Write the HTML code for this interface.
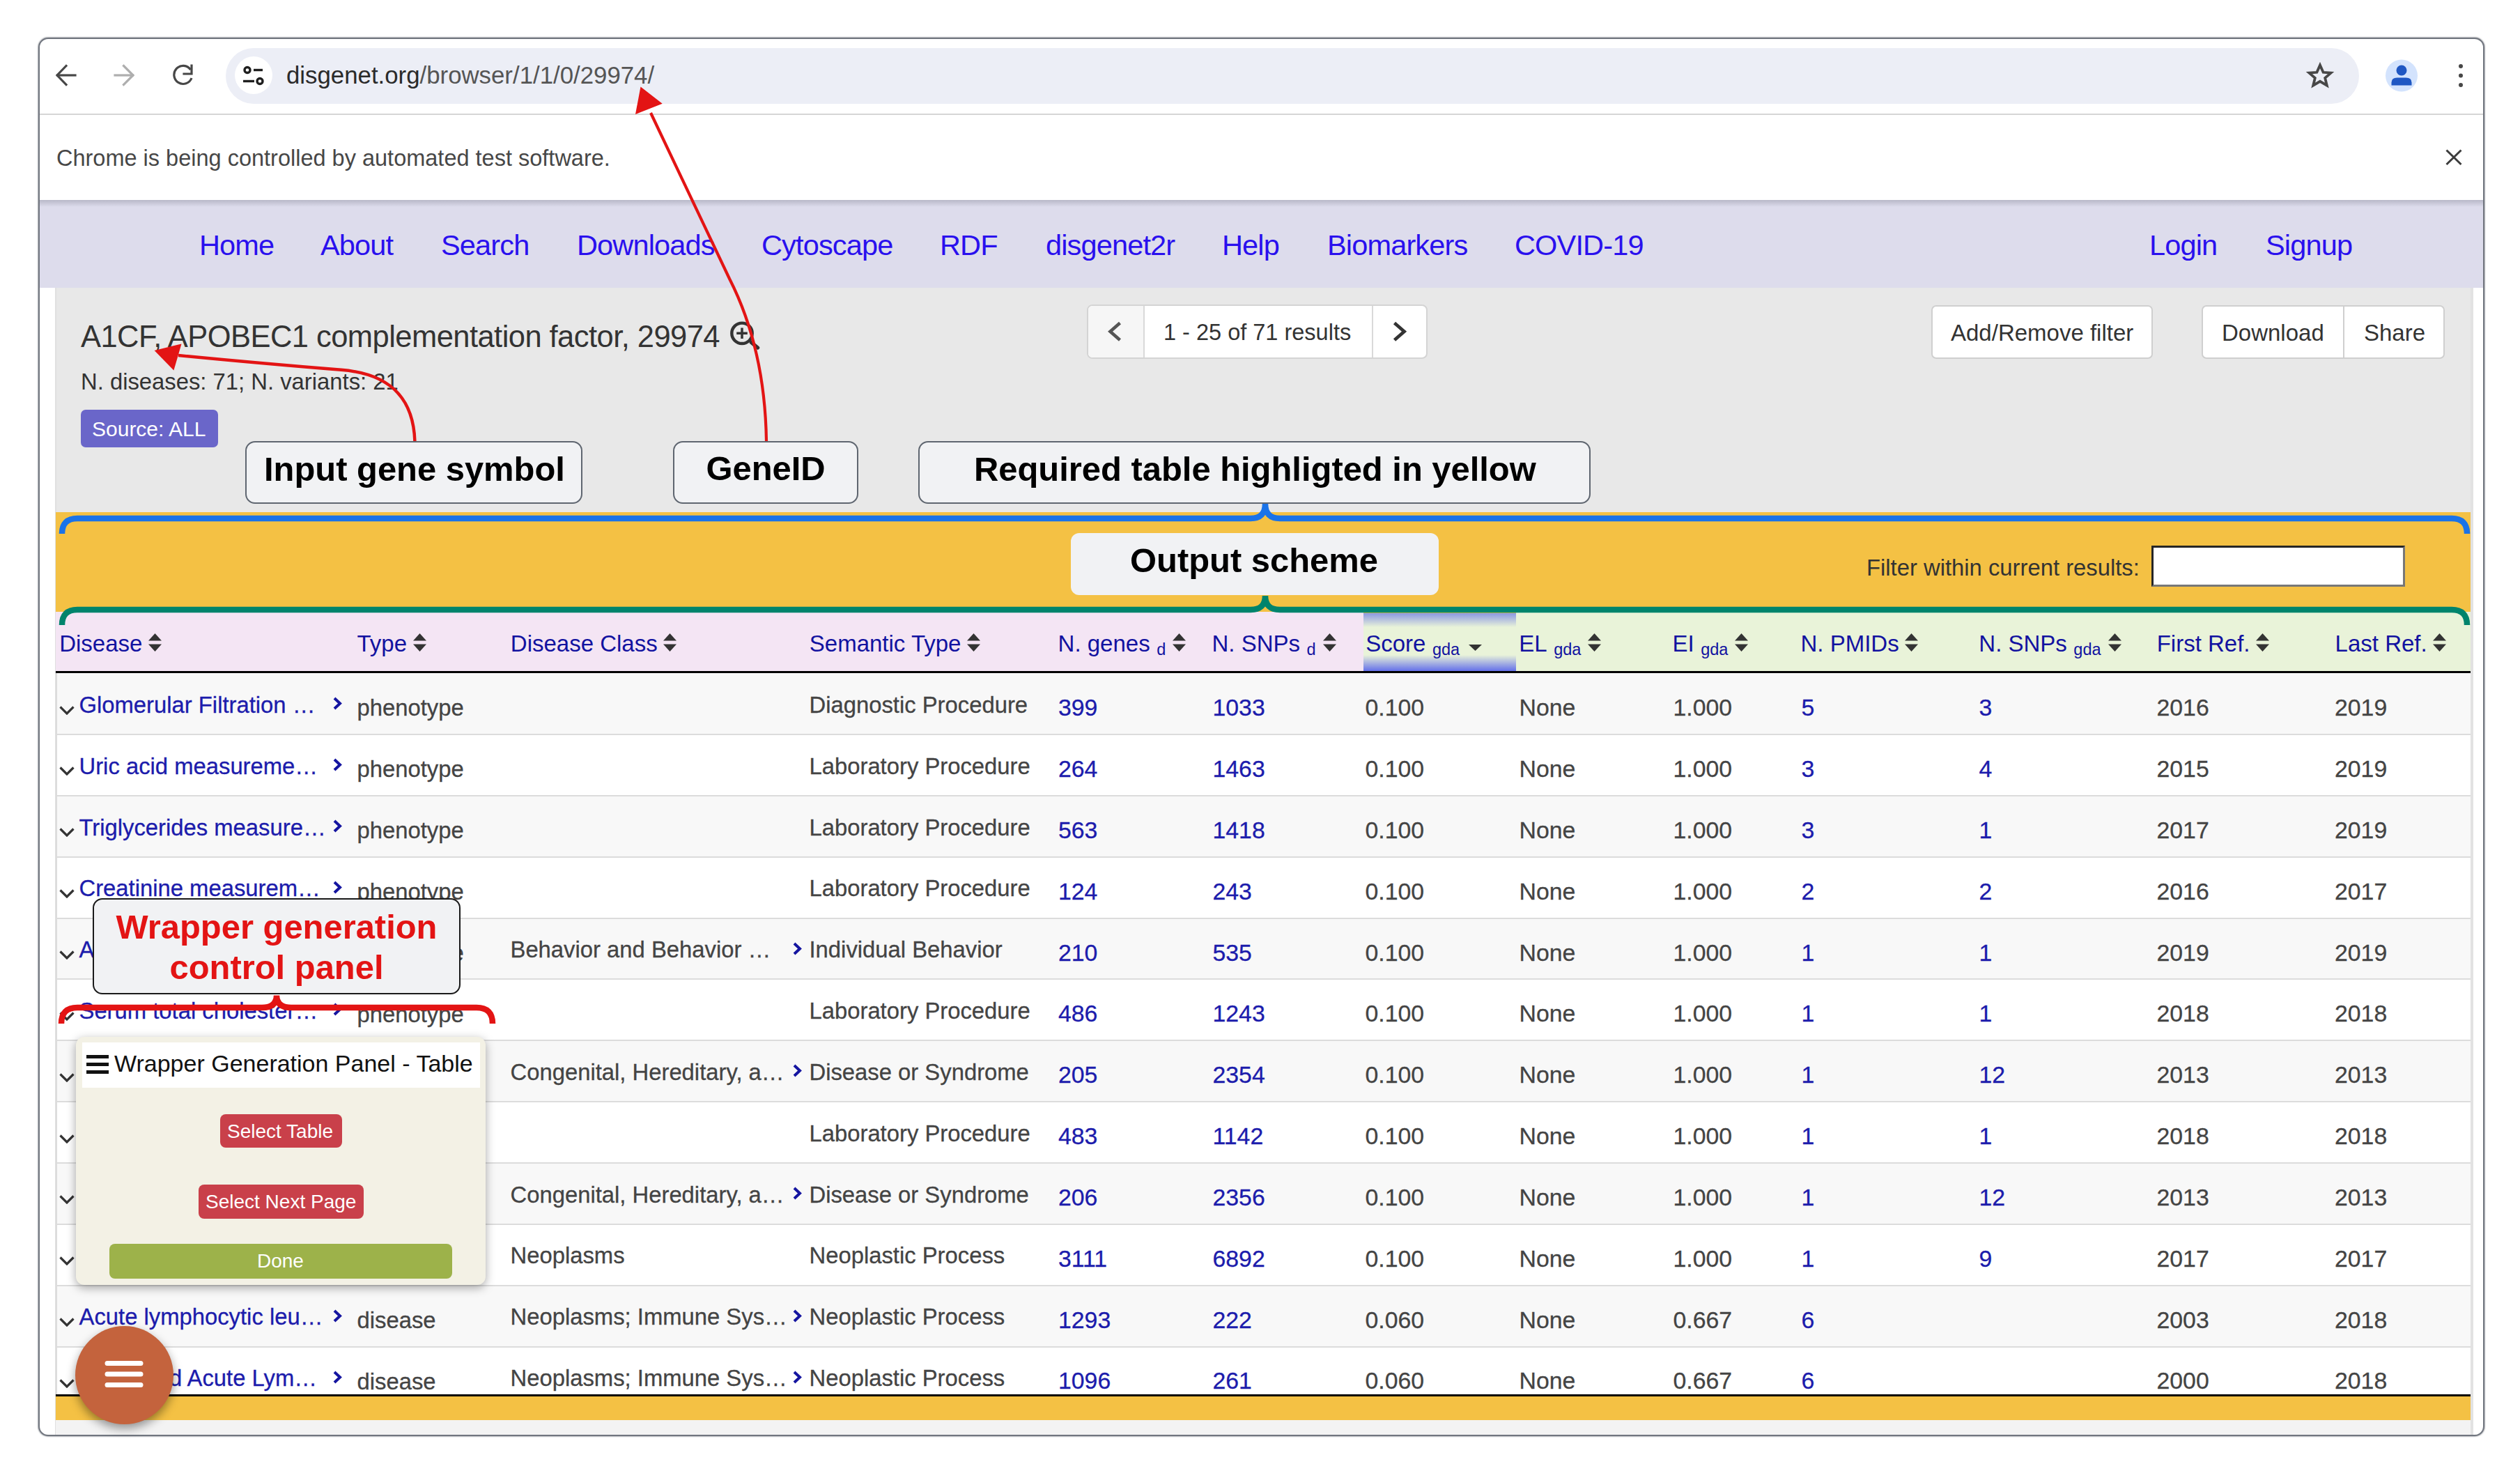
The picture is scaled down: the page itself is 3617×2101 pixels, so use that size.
<!DOCTYPE html>
<html><head><meta charset="utf-8">
<style>
*{box-sizing:border-box}
html,body{margin:0;padding:0}
body{width:3617px;height:2101px;position:relative;overflow:hidden;background:#fff;font-family:"Liberation Sans",sans-serif}
.a{position:absolute}
.t{position:absolute;white-space:nowrap;line-height:1}
#win{position:absolute;left:54.5px;top:53.5px;width:3511px;height:2007px;border:2.5px solid #71767f;border-radius:14px;overflow:hidden;background:#fff;box-shadow:0 0 1.5px 1px rgba(120,124,132,0.55)}
.nav{color:#2a10ee;font-size:41.5px;letter-spacing:-0.85px}
.annot{position:absolute;background:#f1f2f4;border:2.5px solid #5f6670;border-radius:14px;font-weight:bold;font-size:48px;color:#000;text-align:center}
.btn{position:absolute;background:#fff;border:2px solid #cfcfcf;border-radius:7px;font-size:33px;color:#333}
.hd{font-size:33px;color:#1212a0;display:flex;align-items:baseline}
.td{font-size:32.8px;-webkit-text-stroke:0.3px currentColor}
</style></head>
<body>
<div id="win"></div>

<!-- toolbar -->
<div class="a" style="left:57px;top:163px;width:3507px;height:2px;background:#d6d6d6"></div>
<div class="a" style="left:324px;top:69px;width:3062px;height:80px;border-radius:40px;background:#eceef6"></div>
<div class="a" style="left:337px;top:81px;width:54px;height:54px;border-radius:27px;background:#fff"></div>
<div class="t" style="left:411px;top:91px;font-size:34.8px;color:#2a2a2a">disgenet.org<span style="color:#555">/browser/1/1/0/29974/</span></div>

<!-- infobar -->
<div class="t" style="left:81px;top:211px;font-size:32.5px;color:#474747">Chrome is being controlled by automated test software.</div>

<!-- nav -->
<div class="a" style="left:57px;top:287px;width:3507px;height:126px;background:#dddcec"></div>
<div class="a" style="left:57px;top:287px;width:3507px;height:10px;background:linear-gradient(#b8b8c8,#dddcec)"></div>
<div class="t nav" style="left:286px;top:331px">Home</div>
<div class="t nav" style="left:460px;top:331px">About</div>
<div class="t nav" style="left:633px;top:331px">Search</div>
<div class="t nav" style="left:828px;top:331px">Downloads</div>
<div class="t nav" style="left:1093px;top:331px">Cytoscape</div>
<div class="t nav" style="left:1349px;top:331px">RDF</div>
<div class="t nav" style="left:1501px;top:331px">disgenet2r</div>
<div class="t nav" style="left:1754px;top:331px">Help</div>
<div class="t nav" style="left:1905px;top:331px">Biomarkers</div>
<div class="t nav" style="left:2174px;top:331px">COVID-19</div>
<div class="t nav" style="left:3085px;top:331px">Login</div>
<div class="t nav" style="left:3252px;top:331px">Signup</div>

<!-- content gray -->
<div class="a" style="left:80px;top:413px;width:3467px;height:1646px;background:#e8e8e8"></div>


<!-- toolbar icons -->
<svg class="a" style="left:0;top:0" width="600" height="170" viewBox="0 0 600 170">
 <g fill="none" stroke="#474747" stroke-width="3.2" stroke-linecap="square">
  <path d="M82.5 108 H108"/><path d="M95 94.5 L82 108 L95 121.5"/>
 </g>
 <g fill="none" stroke="#aeaeae" stroke-width="3.2" stroke-linecap="square">
  <path d="M165 108 H190.5"/><path d="M177.5 94.5 L191 108 L177.5 121.5"/>
 </g>
 <g fill="none" stroke="#474747" stroke-width="3.2">
  <path d="M273.5 100 A13 13 0 1 0 275 112"/>
  <path d="M275 94 V106 H264" stroke-linecap="square"/>
 </g>
 <g fill="none" stroke="#1f1f1f" stroke-width="3.4">
  <circle cx="355" cy="100.5" r="4"/><path d="M364 100.5 H377"/>
  <circle cx="373" cy="116.5" r="4"/><path d="M349 116.5 H365"/>
 </g>
</svg>
<svg class="a" style="left:3290px;top:70px" width="270" height="180" viewBox="3290 70 270 180">
 <path d="M3330 93.5 L3334.6 103.8 L3345.6 104.6 L3337.2 111.9 L3339.8 122.6 L3330 116.8 L3320.2 122.6 L3322.8 111.9 L3314.4 104.6 L3325.4 103.8 Z" fill="none" stroke="#474747" stroke-width="3.8" stroke-linejoin="miter"/>
 <circle cx="3447" cy="108.5" r="23" fill="#d3e3fd"/>
 <circle cx="3447" cy="101" r="7.5" fill="#1f57c3"/>
 <path d="M3432.5 122.5 v-4 q0-7 8-7 h13 q8 0 8 7 v4 z" fill="#1f57c3"/>
 <circle cx="3532" cy="95" r="3" fill="#474747"/><circle cx="3532" cy="108.5" r="3" fill="#474747"/><circle cx="3532" cy="122" r="3" fill="#474747"/>
 <path d="M3511.5 215.5 L3532.5 236 M3532.5 215.5 L3511.5 236" stroke="#3c3c3c" stroke-width="3"/>
</svg>

<!-- header area -->
<div class="t" style="left:116px;top:462px;font-size:43.5px;letter-spacing:-0.55px;color:#333">A1CF, APOBEC1 complementation factor, 29974</div>
<svg class="a" style="left:1044px;top:458px" width="50" height="46" viewBox="0 0 50 46">
 <circle cx="21" cy="20.3" r="14.7" fill="none" stroke="#333" stroke-width="4.4"/>
 <path d="M34.5 33.5 L43.5 41" stroke="#333" stroke-width="5.5" stroke-linecap="round"/>
 <path d="M21 12.5 V28 M13.2 20.3 H28.8" stroke="#333" stroke-width="3.5"/>
</svg>
<div class="t" style="left:116px;top:532px;font-size:32.8px;color:#333">N. diseases: 71; N. variants: 21</div>
<div class="a" style="left:116px;top:588px;width:197px;height:54px;background:#6a66c9;border-radius:7px"></div>
<div class="t" style="left:132px;top:601px;font-size:30px;color:#fff">Source: ALL</div>

<!-- pagination -->
<div class="a" style="left:1560px;top:436.5px;width:489px;height:78px;border:2px solid #d4d4d4;border-radius:8px;background:#fff;overflow:hidden">
 <div class="a" style="left:0;top:0;width:81px;height:74px;background:#f6f6f6;border-right:2.5px solid #d9d9d9"></div>
 <div class="a" style="left:407px;top:0;width:80px;height:74px;border-left:2.5px solid #d9d9d9"></div>
</div>
<svg class="a" style="left:1585px;top:455px" width="440" height="40" viewBox="1585 455 440 40">
 <path d="M1607.5 463.5 L1593.5 475.7 L1607.5 488" fill="none" stroke="#555" stroke-width="4.6"/>
 <path d="M2001.5 463.5 L2015.5 475.7 L2001.5 488" fill="none" stroke="#333" stroke-width="4.8"/>
</svg>
<div class="t" style="left:1670px;top:461px;font-size:32.5px;color:#333">1 - 25 of 71 results</div>

<!-- buttons -->
<div class="btn" style="left:2772px;top:437.5px;width:318px;height:77px"></div>
<div class="t" style="left:2800px;top:461px;font-size:33px;color:#333">Add/Remove filter</div>
<div class="btn" style="left:3160px;top:437.5px;width:349px;height:77px"></div>
<div class="a" style="left:3363px;top:439px;width:2px;height:74px;background:#cfcfcf"></div>
<div class="t" style="left:3189px;top:461px;font-size:33px;color:#333">Download</div>
<div class="t" style="left:3393px;top:461px;font-size:33px;color:#333">Share</div>

<div class="a" style="left:3546px;top:413px;width:3.5px;height:1646px;background:#e2e2e2"></div>
<div class="a" style="left:78.5px;top:413px;width:2px;height:1646px;background:#e0e0e0"></div>
<!--TABLE-->
<div class="a" style="left:80px;top:735px;width:3466px;height:1303px;background:#f4c144"></div>
<div class="a" style="left:80px;top:2038px;width:3466px;height:21px;background:#f3f3f3"></div>
<div class="t" style="left:2679px;top:799px;font-size:32.8px;color:#333">Filter within current results:</div>
<div class="a" style="left:3087.5px;top:782.5px;width:364.5px;height:59px;background:#fff;border:3px solid #777;border-top:3.5px solid #262626;border-left:3.5px solid #262626"></div>
<div class="a" style="left:80px;top:878px;width:1877px;height:85px;background:#f4e5f4"></div>
<div class="a" style="left:1957px;top:880px;width:219px;height:83px;background:linear-gradient(#8a98e2 0px,#e9f3d9 20px,#e9f3d9 60px,#6470ea 83px)"></div>
<div class="a" style="left:2176px;top:878px;width:1370px;height:85px;background:#e9f3d9"></div>
<div class="a" style="left:80px;top:963px;width:3466px;height:2.5px;background:#000"></div>
<div class="t hd" style="left:85.2px;top:907px">Disease<svg width="19" height="26" viewBox="0 0 19 26" style="margin-left:8.5px;vertical-align:0"><path d="M0 10.5 L9.5 0 L19 10.5Z M0 15.5 L19 15.5 L9.5 26Z" fill="#333"/></svg></div>
<div class="t hd" style="left:512.5px;top:907px">Type<svg width="19" height="26" viewBox="0 0 19 26" style="margin-left:8.5px;vertical-align:0"><path d="M0 10.5 L9.5 0 L19 10.5Z M0 15.5 L19 15.5 L9.5 26Z" fill="#333"/></svg></div>
<div class="t hd" style="left:732.8px;top:907px">Disease Class<svg width="19" height="26" viewBox="0 0 19 26" style="margin-left:8.5px;vertical-align:0"><path d="M0 10.5 L9.5 0 L19 10.5Z M0 15.5 L19 15.5 L9.5 26Z" fill="#333"/></svg></div>
<div class="t hd" style="left:1161.8px;top:907px">Semantic Type<svg width="19" height="26" viewBox="0 0 19 26" style="margin-left:8.5px;vertical-align:0"><path d="M0 10.5 L9.5 0 L19 10.5Z M0 15.5 L19 15.5 L9.5 26Z" fill="#333"/></svg></div>
<div class="t hd" style="left:1518.6px;top:907px">N. genes<span style="font-size:23.5px;position:relative;top:5px;margin-left:9.5px;margin-right:1.5px">d</span><svg width="19" height="26" viewBox="0 0 19 26" style="margin-left:8.5px;vertical-align:0"><path d="M0 10.5 L9.5 0 L19 10.5Z M0 15.5 L19 15.5 L9.5 26Z" fill="#333"/></svg></div>
<div class="t hd" style="left:1739.5px;top:907px">N. SNPs<span style="font-size:23.5px;position:relative;top:5px;margin-left:9.5px;margin-right:1.5px">d</span><svg width="19" height="26" viewBox="0 0 19 26" style="margin-left:8.5px;vertical-align:0"><path d="M0 10.5 L9.5 0 L19 10.5Z M0 15.5 L19 15.5 L9.5 26Z" fill="#333"/></svg></div>
<div class="t hd" style="left:1960.2px;top:907px">Score<span style="font-size:23.5px;position:relative;top:5px;margin-left:9.5px;margin-right:1.5px">gda</span><svg width="19" height="10" viewBox="0 0 19 10" style="margin-left:11px;vertical-align:1px"><path d="M0 0 L19 0 L9.5 9Z" fill="#333"/></svg></div>
<div class="t hd" style="left:2180.3px;top:907px">EL<span style="font-size:23.5px;position:relative;top:5px;margin-left:9.5px;margin-right:1.5px">gda</span><svg width="19" height="26" viewBox="0 0 19 26" style="margin-left:8.5px;vertical-align:0"><path d="M0 10.5 L9.5 0 L19 10.5Z M0 15.5 L19 15.5 L9.5 26Z" fill="#333"/></svg></div>
<div class="t hd" style="left:2400.5px;top:907px">EI<span style="font-size:23.5px;position:relative;top:5px;margin-left:9.5px;margin-right:1.5px">gda</span><svg width="19" height="26" viewBox="0 0 19 26" style="margin-left:8.5px;vertical-align:0"><path d="M0 10.5 L9.5 0 L19 10.5Z M0 15.5 L19 15.5 L9.5 26Z" fill="#333"/></svg></div>
<div class="t hd" style="left:2584.5px;top:907px">N. PMIDs<svg width="19" height="26" viewBox="0 0 19 26" style="margin-left:8.5px;vertical-align:0"><path d="M0 10.5 L9.5 0 L19 10.5Z M0 15.5 L19 15.5 L9.5 26Z" fill="#333"/></svg></div>
<div class="t hd" style="left:2840.3px;top:907px">N. SNPs<span style="font-size:23.5px;position:relative;top:5px;margin-left:9.5px;margin-right:1.5px">gda</span><svg width="19" height="26" viewBox="0 0 19 26" style="margin-left:8.5px;vertical-align:0"><path d="M0 10.5 L9.5 0 L19 10.5Z M0 15.5 L19 15.5 L9.5 26Z" fill="#333"/></svg></div>
<div class="t hd" style="left:3095.7px;top:907px">First Ref.<svg width="19" height="26" viewBox="0 0 19 26" style="margin-left:8.5px;vertical-align:0"><path d="M0 10.5 L9.5 0 L19 10.5Z M0 15.5 L19 15.5 L9.5 26Z" fill="#333"/></svg></div>
<div class="t hd" style="left:3351.6px;top:907px">Last Ref.<svg width="19" height="26" viewBox="0 0 19 26" style="margin-left:8.5px;vertical-align:0"><path d="M0 10.5 L9.5 0 L19 10.5Z M0 15.5 L19 15.5 L9.5 26Z" fill="#333"/></svg></div>
<div class="a" style="left:80px;top:966.00px;width:3466px;height:88.00px;background:#f8f8f8"></div>
<div class="a" style="left:80px;top:1053.00px;width:3466px;height:2px;background:#dcdcdc"></div>
<svg class="a" style="left:85px;top:1012.60px" width="22" height="13" viewBox="0 0 22 13"><path d="M1.5 1.5 L11 11 L20.5 1.5" fill="none" stroke="#333" stroke-width="3.2"/></svg>
<div class="t td" style="left:113.5px;top:995.80px;color:#1c1cac;font-size:32.8px">Glomerular Filtration …</div>
<div class="t td" style="left:512.5px;top:1000.30px;color:#444;font-size:32.8px">phenotype</div>
<div class="t td" style="left:1161.5px;top:995.80px;color:#444;font-size:32.8px">Diagnostic Procedure</div>
<div class="t td" style="left:1519.0px;top:999.10px;color:#1c1cac;font-size:33.8px">399</div>
<div class="t td" style="left:1740.5px;top:999.10px;color:#1c1cac;font-size:33.8px">1033</div>
<div class="t td" style="left:1959.5px;top:999.10px;color:#444;font-size:33.8px">0.100</div>
<div class="t td" style="left:2180.5px;top:999.10px;color:#444;font-size:33.8px">None</div>
<div class="t td" style="left:2401.5px;top:999.10px;color:#444;font-size:33.8px">1.000</div>
<div class="t td" style="left:2585.5px;top:999.10px;color:#1c1cac;font-size:33.8px">5</div>
<div class="t td" style="left:2840.5px;top:999.10px;color:#1c1cac;font-size:33.8px">3</div>
<div class="t td" style="left:3095.5px;top:999.10px;color:#444;font-size:33.8px">2016</div>
<div class="t td" style="left:3351.0px;top:999.10px;color:#444;font-size:33.8px">2019</div>
<svg class="a" style="left:477px;top:1000.20px" width="14" height="19" viewBox="0 0 14 19"><path d="M3 2 L11 9.5 L3 17" fill="none" stroke="#1515a0" stroke-width="4"/></svg>
<div class="a" style="left:80px;top:1055.00px;width:3466px;height:86.85px;background:#fff"></div>
<div class="a" style="left:80px;top:1140.85px;width:3466px;height:2px;background:#dcdcdc"></div>
<svg class="a" style="left:85px;top:1100.45px" width="22" height="13" viewBox="0 0 22 13"><path d="M1.5 1.5 L11 11 L20.5 1.5" fill="none" stroke="#333" stroke-width="3.2"/></svg>
<div class="t td" style="left:113.5px;top:1083.65px;color:#1c1cac;font-size:32.8px">Uric acid measureme…</div>
<div class="t td" style="left:512.5px;top:1088.15px;color:#444;font-size:32.8px">phenotype</div>
<div class="t td" style="left:1161.5px;top:1083.65px;color:#444;font-size:32.8px">Laboratory Procedure</div>
<div class="t td" style="left:1519.0px;top:1086.95px;color:#1c1cac;font-size:33.8px">264</div>
<div class="t td" style="left:1740.5px;top:1086.95px;color:#1c1cac;font-size:33.8px">1463</div>
<div class="t td" style="left:1959.5px;top:1086.95px;color:#444;font-size:33.8px">0.100</div>
<div class="t td" style="left:2180.5px;top:1086.95px;color:#444;font-size:33.8px">None</div>
<div class="t td" style="left:2401.5px;top:1086.95px;color:#444;font-size:33.8px">1.000</div>
<div class="t td" style="left:2585.5px;top:1086.95px;color:#1c1cac;font-size:33.8px">3</div>
<div class="t td" style="left:2840.5px;top:1086.95px;color:#1c1cac;font-size:33.8px">4</div>
<div class="t td" style="left:3095.5px;top:1086.95px;color:#444;font-size:33.8px">2015</div>
<div class="t td" style="left:3351.0px;top:1086.95px;color:#444;font-size:33.8px">2019</div>
<svg class="a" style="left:477px;top:1088.05px" width="14" height="19" viewBox="0 0 14 19"><path d="M3 2 L11 9.5 L3 17" fill="none" stroke="#1515a0" stroke-width="4"/></svg>
<div class="a" style="left:80px;top:1142.85px;width:3466px;height:86.85px;background:#f8f8f8"></div>
<div class="a" style="left:80px;top:1228.70px;width:3466px;height:2px;background:#dcdcdc"></div>
<svg class="a" style="left:85px;top:1188.30px" width="22" height="13" viewBox="0 0 22 13"><path d="M1.5 1.5 L11 11 L20.5 1.5" fill="none" stroke="#333" stroke-width="3.2"/></svg>
<div class="t td" style="left:113.5px;top:1171.50px;color:#1c1cac;font-size:32.8px">Triglycerides measure…</div>
<div class="t td" style="left:512.5px;top:1176.00px;color:#444;font-size:32.8px">phenotype</div>
<div class="t td" style="left:1161.5px;top:1171.50px;color:#444;font-size:32.8px">Laboratory Procedure</div>
<div class="t td" style="left:1519.0px;top:1174.80px;color:#1c1cac;font-size:33.8px">563</div>
<div class="t td" style="left:1740.5px;top:1174.80px;color:#1c1cac;font-size:33.8px">1418</div>
<div class="t td" style="left:1959.5px;top:1174.80px;color:#444;font-size:33.8px">0.100</div>
<div class="t td" style="left:2180.5px;top:1174.80px;color:#444;font-size:33.8px">None</div>
<div class="t td" style="left:2401.5px;top:1174.80px;color:#444;font-size:33.8px">1.000</div>
<div class="t td" style="left:2585.5px;top:1174.80px;color:#1c1cac;font-size:33.8px">3</div>
<div class="t td" style="left:2840.5px;top:1174.80px;color:#1c1cac;font-size:33.8px">1</div>
<div class="t td" style="left:3095.5px;top:1174.80px;color:#444;font-size:33.8px">2017</div>
<div class="t td" style="left:3351.0px;top:1174.80px;color:#444;font-size:33.8px">2019</div>
<svg class="a" style="left:477px;top:1175.90px" width="14" height="19" viewBox="0 0 14 19"><path d="M3 2 L11 9.5 L3 17" fill="none" stroke="#1515a0" stroke-width="4"/></svg>
<div class="a" style="left:80px;top:1230.70px;width:3466px;height:86.85px;background:#fff"></div>
<div class="a" style="left:80px;top:1316.55px;width:3466px;height:2px;background:#dcdcdc"></div>
<svg class="a" style="left:85px;top:1276.15px" width="22" height="13" viewBox="0 0 22 13"><path d="M1.5 1.5 L11 11 L20.5 1.5" fill="none" stroke="#333" stroke-width="3.2"/></svg>
<div class="t td" style="left:113.5px;top:1259.35px;color:#1c1cac;font-size:32.8px">Creatinine measurem…</div>
<div class="t td" style="left:512.5px;top:1263.85px;color:#444;font-size:32.8px">phenotype</div>
<div class="t td" style="left:1161.5px;top:1259.35px;color:#444;font-size:32.8px">Laboratory Procedure</div>
<div class="t td" style="left:1519.0px;top:1262.65px;color:#1c1cac;font-size:33.8px">124</div>
<div class="t td" style="left:1740.5px;top:1262.65px;color:#1c1cac;font-size:33.8px">243</div>
<div class="t td" style="left:1959.5px;top:1262.65px;color:#444;font-size:33.8px">0.100</div>
<div class="t td" style="left:2180.5px;top:1262.65px;color:#444;font-size:33.8px">None</div>
<div class="t td" style="left:2401.5px;top:1262.65px;color:#444;font-size:33.8px">1.000</div>
<div class="t td" style="left:2585.5px;top:1262.65px;color:#1c1cac;font-size:33.8px">2</div>
<div class="t td" style="left:2840.5px;top:1262.65px;color:#1c1cac;font-size:33.8px">2</div>
<div class="t td" style="left:3095.5px;top:1262.65px;color:#444;font-size:33.8px">2016</div>
<div class="t td" style="left:3351.0px;top:1262.65px;color:#444;font-size:33.8px">2017</div>
<svg class="a" style="left:477px;top:1263.75px" width="14" height="19" viewBox="0 0 14 19"><path d="M3 2 L11 9.5 L3 17" fill="none" stroke="#1515a0" stroke-width="4"/></svg>
<div class="a" style="left:80px;top:1318.55px;width:3466px;height:86.85px;background:#f8f8f8"></div>
<div class="a" style="left:80px;top:1404.40px;width:3466px;height:2px;background:#dcdcdc"></div>
<svg class="a" style="left:85px;top:1364.00px" width="22" height="13" viewBox="0 0 22 13"><path d="M1.5 1.5 L11 11 L20.5 1.5" fill="none" stroke="#333" stroke-width="3.2"/></svg>
<div class="t td" style="left:113.5px;top:1347.20px;color:#1c1cac;font-size:32.8px">Alcohol consumption …</div>
<div class="t td" style="left:512.5px;top:1351.70px;color:#444;font-size:32.8px">phenotype</div>
<div class="t td" style="left:732.5px;top:1347.20px;color:#444;font-size:32.8px">Behavior and Behavior …</div>
<div class="t td" style="left:1161.5px;top:1347.20px;color:#444;font-size:32.8px">Individual Behavior</div>
<div class="t td" style="left:1519.0px;top:1350.50px;color:#1c1cac;font-size:33.8px">210</div>
<div class="t td" style="left:1740.5px;top:1350.50px;color:#1c1cac;font-size:33.8px">535</div>
<div class="t td" style="left:1959.5px;top:1350.50px;color:#444;font-size:33.8px">0.100</div>
<div class="t td" style="left:2180.5px;top:1350.50px;color:#444;font-size:33.8px">None</div>
<div class="t td" style="left:2401.5px;top:1350.50px;color:#444;font-size:33.8px">1.000</div>
<div class="t td" style="left:2585.5px;top:1350.50px;color:#1c1cac;font-size:33.8px">1</div>
<div class="t td" style="left:2840.5px;top:1350.50px;color:#1c1cac;font-size:33.8px">1</div>
<div class="t td" style="left:3095.5px;top:1350.50px;color:#444;font-size:33.8px">2019</div>
<div class="t td" style="left:3351.0px;top:1350.50px;color:#444;font-size:33.8px">2019</div>
<svg class="a" style="left:477px;top:1351.60px" width="14" height="19" viewBox="0 0 14 19"><path d="M3 2 L11 9.5 L3 17" fill="none" stroke="#1515a0" stroke-width="4"/></svg>
<svg class="a" style="left:1137px;top:1351.60px" width="14" height="19" viewBox="0 0 14 19"><path d="M3 2 L11 9.5 L3 17" fill="none" stroke="#1515a0" stroke-width="4"/></svg>
<div class="a" style="left:80px;top:1406.40px;width:3466px;height:86.85px;background:#fff"></div>
<div class="a" style="left:80px;top:1492.25px;width:3466px;height:2px;background:#dcdcdc"></div>
<svg class="a" style="left:85px;top:1451.85px" width="22" height="13" viewBox="0 0 22 13"><path d="M1.5 1.5 L11 11 L20.5 1.5" fill="none" stroke="#333" stroke-width="3.2"/></svg>
<div class="t td" style="left:113.5px;top:1435.05px;color:#1c1cac;font-size:32.8px">Serum total cholester…</div>
<div class="t td" style="left:512.5px;top:1439.55px;color:#444;font-size:32.8px">phenotype</div>
<div class="t td" style="left:1161.5px;top:1435.05px;color:#444;font-size:32.8px">Laboratory Procedure</div>
<div class="t td" style="left:1519.0px;top:1438.35px;color:#1c1cac;font-size:33.8px">486</div>
<div class="t td" style="left:1740.5px;top:1438.35px;color:#1c1cac;font-size:33.8px">1243</div>
<div class="t td" style="left:1959.5px;top:1438.35px;color:#444;font-size:33.8px">0.100</div>
<div class="t td" style="left:2180.5px;top:1438.35px;color:#444;font-size:33.8px">None</div>
<div class="t td" style="left:2401.5px;top:1438.35px;color:#444;font-size:33.8px">1.000</div>
<div class="t td" style="left:2585.5px;top:1438.35px;color:#1c1cac;font-size:33.8px">1</div>
<div class="t td" style="left:2840.5px;top:1438.35px;color:#1c1cac;font-size:33.8px">1</div>
<div class="t td" style="left:3095.5px;top:1438.35px;color:#444;font-size:33.8px">2018</div>
<div class="t td" style="left:3351.0px;top:1438.35px;color:#444;font-size:33.8px">2018</div>
<svg class="a" style="left:477px;top:1439.45px" width="14" height="19" viewBox="0 0 14 19"><path d="M3 2 L11 9.5 L3 17" fill="none" stroke="#1515a0" stroke-width="4"/></svg>
<div class="a" style="left:80px;top:1494.25px;width:3466px;height:86.85px;background:#f8f8f8"></div>
<div class="a" style="left:80px;top:1580.10px;width:3466px;height:2px;background:#dcdcdc"></div>
<svg class="a" style="left:85px;top:1539.70px" width="22" height="13" viewBox="0 0 22 13"><path d="M1.5 1.5 L11 11 L20.5 1.5" fill="none" stroke="#333" stroke-width="3.2"/></svg>
<div class="t td" style="left:113.5px;top:1522.90px;color:#1c1cac;font-size:32.8px">Kidney Diseases …</div>
<div class="t td" style="left:512.5px;top:1527.40px;color:#444;font-size:32.8px">disease</div>
<div class="t td" style="left:732.5px;top:1522.90px;color:#444;font-size:32.8px">Congenital, Hereditary, a…</div>
<div class="t td" style="left:1161.5px;top:1522.90px;color:#444;font-size:32.8px">Disease or Syndrome</div>
<div class="t td" style="left:1519.0px;top:1526.20px;color:#1c1cac;font-size:33.8px">205</div>
<div class="t td" style="left:1740.5px;top:1526.20px;color:#1c1cac;font-size:33.8px">2354</div>
<div class="t td" style="left:1959.5px;top:1526.20px;color:#444;font-size:33.8px">0.100</div>
<div class="t td" style="left:2180.5px;top:1526.20px;color:#444;font-size:33.8px">None</div>
<div class="t td" style="left:2401.5px;top:1526.20px;color:#444;font-size:33.8px">1.000</div>
<div class="t td" style="left:2585.5px;top:1526.20px;color:#1c1cac;font-size:33.8px">1</div>
<div class="t td" style="left:2840.5px;top:1526.20px;color:#1c1cac;font-size:33.8px">12</div>
<div class="t td" style="left:3095.5px;top:1526.20px;color:#444;font-size:33.8px">2013</div>
<div class="t td" style="left:3351.0px;top:1526.20px;color:#444;font-size:33.8px">2013</div>
<svg class="a" style="left:477px;top:1527.30px" width="14" height="19" viewBox="0 0 14 19"><path d="M3 2 L11 9.5 L3 17" fill="none" stroke="#1515a0" stroke-width="4"/></svg>
<svg class="a" style="left:1137px;top:1527.30px" width="14" height="19" viewBox="0 0 14 19"><path d="M3 2 L11 9.5 L3 17" fill="none" stroke="#1515a0" stroke-width="4"/></svg>
<div class="a" style="left:80px;top:1582.10px;width:3466px;height:86.85px;background:#fff"></div>
<div class="a" style="left:80px;top:1667.95px;width:3466px;height:2px;background:#dcdcdc"></div>
<svg class="a" style="left:85px;top:1627.55px" width="22" height="13" viewBox="0 0 22 13"><path d="M1.5 1.5 L11 11 L20.5 1.5" fill="none" stroke="#333" stroke-width="3.2"/></svg>
<div class="t td" style="left:113.5px;top:1610.75px;color:#1c1cac;font-size:32.8px">Cholesterol measurem…</div>
<div class="t td" style="left:512.5px;top:1615.25px;color:#444;font-size:32.8px">phenotype</div>
<div class="t td" style="left:1161.5px;top:1610.75px;color:#444;font-size:32.8px">Laboratory Procedure</div>
<div class="t td" style="left:1519.0px;top:1614.05px;color:#1c1cac;font-size:33.8px">483</div>
<div class="t td" style="left:1740.5px;top:1614.05px;color:#1c1cac;font-size:33.8px">1142</div>
<div class="t td" style="left:1959.5px;top:1614.05px;color:#444;font-size:33.8px">0.100</div>
<div class="t td" style="left:2180.5px;top:1614.05px;color:#444;font-size:33.8px">None</div>
<div class="t td" style="left:2401.5px;top:1614.05px;color:#444;font-size:33.8px">1.000</div>
<div class="t td" style="left:2585.5px;top:1614.05px;color:#1c1cac;font-size:33.8px">1</div>
<div class="t td" style="left:2840.5px;top:1614.05px;color:#1c1cac;font-size:33.8px">1</div>
<div class="t td" style="left:3095.5px;top:1614.05px;color:#444;font-size:33.8px">2018</div>
<div class="t td" style="left:3351.0px;top:1614.05px;color:#444;font-size:33.8px">2018</div>
<svg class="a" style="left:477px;top:1615.15px" width="14" height="19" viewBox="0 0 14 19"><path d="M3 2 L11 9.5 L3 17" fill="none" stroke="#1515a0" stroke-width="4"/></svg>
<div class="a" style="left:80px;top:1669.95px;width:3466px;height:86.85px;background:#f8f8f8"></div>
<div class="a" style="left:80px;top:1755.80px;width:3466px;height:2px;background:#dcdcdc"></div>
<svg class="a" style="left:85px;top:1715.40px" width="22" height="13" viewBox="0 0 22 13"><path d="M1.5 1.5 L11 11 L20.5 1.5" fill="none" stroke="#333" stroke-width="3.2"/></svg>
<div class="t td" style="left:113.5px;top:1698.60px;color:#1c1cac;font-size:32.8px">Renal Insufficiency …</div>
<div class="t td" style="left:512.5px;top:1703.10px;color:#444;font-size:32.8px">disease</div>
<div class="t td" style="left:732.5px;top:1698.60px;color:#444;font-size:32.8px">Congenital, Hereditary, a…</div>
<div class="t td" style="left:1161.5px;top:1698.60px;color:#444;font-size:32.8px">Disease or Syndrome</div>
<div class="t td" style="left:1519.0px;top:1701.90px;color:#1c1cac;font-size:33.8px">206</div>
<div class="t td" style="left:1740.5px;top:1701.90px;color:#1c1cac;font-size:33.8px">2356</div>
<div class="t td" style="left:1959.5px;top:1701.90px;color:#444;font-size:33.8px">0.100</div>
<div class="t td" style="left:2180.5px;top:1701.90px;color:#444;font-size:33.8px">None</div>
<div class="t td" style="left:2401.5px;top:1701.90px;color:#444;font-size:33.8px">1.000</div>
<div class="t td" style="left:2585.5px;top:1701.90px;color:#1c1cac;font-size:33.8px">1</div>
<div class="t td" style="left:2840.5px;top:1701.90px;color:#1c1cac;font-size:33.8px">12</div>
<div class="t td" style="left:3095.5px;top:1701.90px;color:#444;font-size:33.8px">2013</div>
<div class="t td" style="left:3351.0px;top:1701.90px;color:#444;font-size:33.8px">2013</div>
<svg class="a" style="left:477px;top:1703.00px" width="14" height="19" viewBox="0 0 14 19"><path d="M3 2 L11 9.5 L3 17" fill="none" stroke="#1515a0" stroke-width="4"/></svg>
<svg class="a" style="left:1137px;top:1703.00px" width="14" height="19" viewBox="0 0 14 19"><path d="M3 2 L11 9.5 L3 17" fill="none" stroke="#1515a0" stroke-width="4"/></svg>
<div class="a" style="left:80px;top:1757.80px;width:3466px;height:86.85px;background:#fff"></div>
<div class="a" style="left:80px;top:1843.65px;width:3466px;height:2px;background:#dcdcdc"></div>
<svg class="a" style="left:85px;top:1803.25px" width="22" height="13" viewBox="0 0 22 13"><path d="M1.5 1.5 L11 11 L20.5 1.5" fill="none" stroke="#333" stroke-width="3.2"/></svg>
<div class="t td" style="left:113.5px;top:1786.45px;color:#1c1cac;font-size:32.8px">Malignant Neoplasm …</div>
<div class="t td" style="left:512.5px;top:1790.95px;color:#444;font-size:32.8px">group</div>
<div class="t td" style="left:732.5px;top:1786.45px;color:#444;font-size:32.8px">Neoplasms</div>
<div class="t td" style="left:1161.5px;top:1786.45px;color:#444;font-size:32.8px">Neoplastic Process</div>
<div class="t td" style="left:1519.0px;top:1789.75px;color:#1c1cac;font-size:33.8px">3111</div>
<div class="t td" style="left:1740.5px;top:1789.75px;color:#1c1cac;font-size:33.8px">6892</div>
<div class="t td" style="left:1959.5px;top:1789.75px;color:#444;font-size:33.8px">0.100</div>
<div class="t td" style="left:2180.5px;top:1789.75px;color:#444;font-size:33.8px">None</div>
<div class="t td" style="left:2401.5px;top:1789.75px;color:#444;font-size:33.8px">1.000</div>
<div class="t td" style="left:2585.5px;top:1789.75px;color:#1c1cac;font-size:33.8px">1</div>
<div class="t td" style="left:2840.5px;top:1789.75px;color:#1c1cac;font-size:33.8px">9</div>
<div class="t td" style="left:3095.5px;top:1789.75px;color:#444;font-size:33.8px">2017</div>
<div class="t td" style="left:3351.0px;top:1789.75px;color:#444;font-size:33.8px">2017</div>
<svg class="a" style="left:477px;top:1790.85px" width="14" height="19" viewBox="0 0 14 19"><path d="M3 2 L11 9.5 L3 17" fill="none" stroke="#1515a0" stroke-width="4"/></svg>
<div class="a" style="left:80px;top:1845.65px;width:3466px;height:86.85px;background:#f8f8f8"></div>
<div class="a" style="left:80px;top:1931.50px;width:3466px;height:2px;background:#dcdcdc"></div>
<svg class="a" style="left:85px;top:1891.10px" width="22" height="13" viewBox="0 0 22 13"><path d="M1.5 1.5 L11 11 L20.5 1.5" fill="none" stroke="#333" stroke-width="3.2"/></svg>
<div class="t td" style="left:113.5px;top:1874.30px;color:#1c1cac;font-size:32.8px">Acute lymphocytic leu…</div>
<div class="t td" style="left:512.5px;top:1878.80px;color:#444;font-size:32.8px">disease</div>
<div class="t td" style="left:732.5px;top:1874.30px;color:#444;font-size:32.8px">Neoplasms; Immune Sys…</div>
<div class="t td" style="left:1161.5px;top:1874.30px;color:#444;font-size:32.8px">Neoplastic Process</div>
<div class="t td" style="left:1519.0px;top:1877.60px;color:#1c1cac;font-size:33.8px">1293</div>
<div class="t td" style="left:1740.5px;top:1877.60px;color:#1c1cac;font-size:33.8px">222</div>
<div class="t td" style="left:1959.5px;top:1877.60px;color:#444;font-size:33.8px">0.060</div>
<div class="t td" style="left:2180.5px;top:1877.60px;color:#444;font-size:33.8px">None</div>
<div class="t td" style="left:2401.5px;top:1877.60px;color:#444;font-size:33.8px">0.667</div>
<div class="t td" style="left:2585.5px;top:1877.60px;color:#1c1cac;font-size:33.8px">6</div>
<div class="t td" style="left:3095.5px;top:1877.60px;color:#444;font-size:33.8px">2003</div>
<div class="t td" style="left:3351.0px;top:1877.60px;color:#444;font-size:33.8px">2018</div>
<svg class="a" style="left:477px;top:1878.70px" width="14" height="19" viewBox="0 0 14 19"><path d="M3 2 L11 9.5 L3 17" fill="none" stroke="#1515a0" stroke-width="4"/></svg>
<svg class="a" style="left:1137px;top:1878.70px" width="14" height="19" viewBox="0 0 14 19"><path d="M3 2 L11 9.5 L3 17" fill="none" stroke="#1515a0" stroke-width="4"/></svg>
<div class="a" style="left:80px;top:1933.50px;width:3466px;height:67.50px;background:#fff"></div>
<svg class="a" style="left:85px;top:1978.95px" width="22" height="13" viewBox="0 0 22 13"><path d="M1.5 1.5 L11 11 L20.5 1.5" fill="none" stroke="#333" stroke-width="3.2"/></svg>
<div class="t td" style="left:113.5px;top:1962.15px;color:#1c1cac;font-size:32.8px">Childhood Acute Lym…</div>
<div class="t td" style="left:512.5px;top:1966.65px;color:#444;font-size:32.8px">disease</div>
<div class="t td" style="left:732.5px;top:1962.15px;color:#444;font-size:32.8px">Neoplasms; Immune Sys…</div>
<div class="t td" style="left:1161.5px;top:1962.15px;color:#444;font-size:32.8px">Neoplastic Process</div>
<div class="t td" style="left:1519.0px;top:1965.45px;color:#1c1cac;font-size:33.8px">1096</div>
<div class="t td" style="left:1740.5px;top:1965.45px;color:#1c1cac;font-size:33.8px">261</div>
<div class="t td" style="left:1959.5px;top:1965.45px;color:#444;font-size:33.8px">0.060</div>
<div class="t td" style="left:2180.5px;top:1965.45px;color:#444;font-size:33.8px">None</div>
<div class="t td" style="left:2401.5px;top:1965.45px;color:#444;font-size:33.8px">0.667</div>
<div class="t td" style="left:2585.5px;top:1965.45px;color:#1c1cac;font-size:33.8px">6</div>
<div class="t td" style="left:3095.5px;top:1965.45px;color:#444;font-size:33.8px">2000</div>
<div class="t td" style="left:3351.0px;top:1965.45px;color:#444;font-size:33.8px">2018</div>
<svg class="a" style="left:477px;top:1966.55px" width="14" height="19" viewBox="0 0 14 19"><path d="M3 2 L11 9.5 L3 17" fill="none" stroke="#1515a0" stroke-width="4"/></svg>
<svg class="a" style="left:1137px;top:1966.55px" width="14" height="19" viewBox="0 0 14 19"><path d="M3 2 L11 9.5 L3 17" fill="none" stroke="#1515a0" stroke-width="4"/></svg>
<div class="a" style="left:80px;top:2000.5px;width:3466px;height:3px;background:#000"></div>
<div class="a" style="left:80px;top:966px;width:1.5px;height:1035px;background:#dcdcdc"></div>
<!--/TABLE-->

<!-- annotations -->
<div class="annot" style="left:352px;top:633px;width:484px;height:90px"></div>
<div class="t" style="left:379px;top:648.5px;font-size:48.9px;font-weight:bold;color:#000">Input gene symbol</div>
<div class="annot" style="left:966px;top:633px;width:266px;height:90px"></div>
<div class="t" style="left:1013.5px;top:648px;font-size:48.9px;font-weight:bold;color:#000">GeneID</div>
<div class="annot" style="left:1318px;top:633px;width:965px;height:90px"></div>
<div class="t" style="left:1398px;top:648.5px;font-size:48.9px;font-weight:bold;color:#000">Required table highligted in yellow</div>
<div class="a" style="left:1537px;top:765px;width:528px;height:89px;background:#f1f2f4;border-radius:12px"></div>
<div class="t" style="left:1622px;top:779.5px;font-size:48.9px;font-weight:bold;color:#000">Output scheme</div>

<div class="annot" style="left:133px;top:1289px;width:528px;height:138px;border-color:#1a1a1a;line-height:58px;color:#e31414;padding-top:10px;font-size:48.9px">Wrapper generation<br>control panel</div>

<!-- wrapper panel -->
<div class="a" style="left:109px;top:1488px;width:588px;height:356px;background:#f3f1e5;border-radius:12px;box-shadow:0 4px 14px rgba(0,0,0,0.35)"></div>
<div class="a" style="left:118px;top:1496px;width:571px;height:65px;background:#fff"></div>
<svg class="a" style="left:124px;top:1514px" width="33" height="27" viewBox="0 0 33 27"><path d="M0 2.5 H32 M0 13.5 H32 M0 24.5 H32" stroke="#111" stroke-width="5"/></svg>
<div class="t" style="left:164px;top:1509px;font-size:34px;color:#111">Wrapper Generation Panel - Table</div>
<div class="a" style="left:316px;top:1599px;width:175px;height:48px;background:#c9404a;border-radius:8px"></div>
<div class="t" style="left:326px;top:1610px;font-size:28px;color:#fff">Select Table</div>
<div class="a" style="left:285px;top:1700px;width:237px;height:49px;background:#c9404a;border-radius:8px"></div>
<div class="t" style="left:295px;top:1711px;font-size:28px;color:#fff">Select Next Page</div>
<div class="a" style="left:157px;top:1785px;width:492px;height:50px;background:#9db24a;border-radius:8px"></div>
<div class="t" style="left:369px;top:1796px;font-size:28px;color:#fff">Done</div>

<!-- FAB -->
<div class="a" style="left:108px;top:1903px;width:141px;height:141px;border-radius:50%;background:#c4633d;box-shadow:0 6px 14px rgba(0,0,0,0.4)"></div>
<svg class="a" style="left:150px;top:1950px" width="56" height="46" viewBox="0 0 56 46"><path d="M4 6.5 H52 M4 22 H52 M4 37.5 H52" stroke="#fff" stroke-width="7" stroke-linecap="round"/></svg>

<!-- overlay svg -->
<svg class="a" style="left:0;top:0" width="3617" height="2101" viewBox="0 0 3617 2101">
 <g fill="none" stroke-width="8.5">
  <path stroke="#1a73e8" d="M89 766 Q89 744 111 744 L1795 744 Q1816 744 1816 723 Q1816 744 1837 744 L3519 744 Q3541 744 3541 766"/>
  <path stroke="#00846c" d="M89 897 Q89 875 111 875 L1795 875 Q1816 875 1816 855 Q1816 875 1837 875 L3519 875 Q3541 875 3541 897"/>
  <path stroke="#e31414" d="M88 1469 Q88 1446 111 1446 L376 1446 Q397 1446 397 1428.5 Q397 1446 418 1446 L684 1446 Q707 1446 707 1469"/>
 </g>
 <g fill="none" stroke="#e31414" stroke-width="4.2">
  <path d="M1100 633 Q1098 500 1047 400 L934 162"/>
  <path stroke-width="4.5" d="M595.4 633 C593.5 578 567 537 489.8 530.8 Q380 522 256 510"/>
 </g>
 <path fill="#e31414" d="M919.5 124.4 L912 164 L950.7 148.8 Z"/>
 <path fill="#e31414" d="M221.6 503 L260.5 493.5 L249.4 531.6 Z"/>
</svg>

</body></html>
